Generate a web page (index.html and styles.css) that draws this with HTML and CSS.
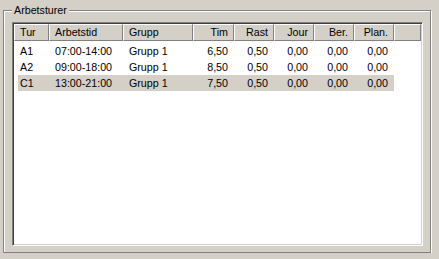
FILE: index.html
```html
<!DOCTYPE html>
<html>
<head>
<meta charset="utf-8">
<link rel="stylesheet" href="styles.css">
</head>
<body>
<div class="group">
  <span class="legend">Arbetsturer</span>
  <div class="list">
    <div class="grid head">
      <div class="hc">Tur</div>
      <div class="hc">Arbetstid</div>
      <div class="hc">Grupp</div>
      <div class="hc r">Tim</div>
      <div class="hc r">Rast</div>
      <div class="hc r">Jour</div>
      <div class="hc r">Ber.</div>
      <div class="hc r">Plan.</div>
      <div class="hc"></div>
    </div>
    <div class="rows">
      <div class="grid row">
        <div class="c">A1</div><div class="c">07:00-14:00</div><div class="c">Grupp 1</div>
        <div class="c r">6,50</div><div class="c r">0,50</div><div class="c r">0,00</div><div class="c r">0,00</div><div class="c r">0,00</div><div class="c"></div>
      </div>
      <div class="grid row">
        <div class="c">A2</div><div class="c">09:00-18:00</div><div class="c">Grupp 1</div>
        <div class="c r">8,50</div><div class="c r">0,50</div><div class="c r">0,00</div><div class="c r">0,00</div><div class="c r">0,00</div><div class="c"></div>
      </div>
      <div class="grid row sel">
        <div class="c">C1</div><div class="c">13:00-21:00</div><div class="c">Grupp 1</div>
        <div class="c r">7,50</div><div class="c r">0,50</div><div class="c r">0,00</div><div class="c r">0,00</div><div class="c r">0,00</div><div class="c"></div>
      </div>
    </div>
  </div>
</div>
</body>
</html>
```
FILE: styles.css
```css
html, body {
  margin: 0;
  padding: 0;
  background: #d4d0c8;
  font-family: "Liberation Sans", Arial, sans-serif;
  font-size: 10.7px;
  color: #000;
}

.group {
  position: relative;
  box-sizing: border-box;
  height: 243px;
  margin: 10px 8px 0 3px;
  padding: 11px 7px 6px 8px;
  border: 1px solid #808080;
  box-shadow: 1px 1px 0 #fff, inset 1px 1px 0 #fff;
}

.legend {
  position: absolute;
  left: 8px;
  top: -7px;
  padding: 0 2px;
  line-height: 13px;
  background: #d4d0c8;
}

.list {
  box-sizing: border-box;
  height: 224px;
  padding: 1px;
  background: #fff;
  border: 1px solid;
  border-color: #808080 #fff #fff #808080;
  box-shadow: inset 1px 1px 0 #404040, inset -1px -1px 0 #d4d0c8;
}

.grid {
  display: grid;
  grid-template-columns: 35px 74px 70px 41px 40px 40px 40px 40px 27px;
}

.head {
  height: 17px;
}

.hc {
  box-sizing: border-box;
  background: #d4d0c8;
  border-top: 1px solid #fff;
  border-left: 1px solid #fff;
  border-right: 1px solid #808080;
  border-bottom: 1px solid #808080;
  padding: 0 5px;
  line-height: 15px;
  white-space: nowrap;
  overflow: hidden;
}

.rows {
  padding-top: 2px;
}

.row {
  height: 16px;
  line-height: 16px;
}

.sel {
  background: linear-gradient(#d4d0c8, #d4d0c8) 4px 0 / 376px 100% no-repeat;
}

.c {
  padding: 0 6px;
  white-space: nowrap;
}

.r {
  text-align: right;
}
```
